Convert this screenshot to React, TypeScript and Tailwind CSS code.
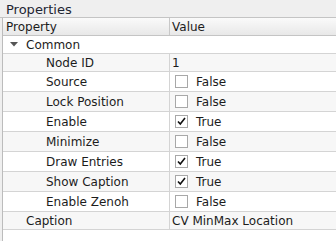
const rows: { name: string; value: string; check?: boolean; checked?: boolean }[] = [
    { name: 'Node ID', value: '1' },
    { name: 'Source', value: 'False', check: true, checked: false },
    { name: 'Lock Position', value: 'False', check: true, checked: false },
    { name: 'Enable', value: 'True', check: true, checked: true },
    { name: 'Minimize', value: 'False', check: true, checked: false },
    { name: 'Draw Entries', value: 'True', check: true, checked: true },
    { name: 'Show Caption', value: 'True', check: true, checked: true },
    { name: 'Enable Zenoh', value: 'False', check: true, checked: false },
]

const CheckBox = ({ checked }: { checked: boolean }) => {
    return (
        <span className="w-[13px] h-[13px] border border-[#a8a8a8] bg-white flex items-center justify-center">
            {checked && (
                <svg width="9" height="9" viewBox="0 0 9 9">
                    <path d="M1 4.5 L3.3 7 L8 1" fill="none" stroke="#111" strokeWidth="1.6" />
                </svg>
            )}
        </span>
    )
}

const PropRow = ({ name, value, check, checked, gray, indent }: { name: string, value: string, check?: boolean, checked?: boolean, gray: boolean, indent: number }) => {
    return (
        <div className={`flex border-b border-[#d4d4d4] ${check ? 'h-[20px]' : 'h-[18px]'} ${gray ? 'bg-[#f7f7f7]' : 'bg-white'}`}>
            <div className="w-[167px] border-r border-[#d4d4d4] flex items-center" style={{ paddingLeft: indent }}>
                {name}
            </div>
            <div className="flex-1 flex items-center pl-[2px] gap-[8px]">
                {check ? (
                    <>
                        <span className="ml-[3px]"><CheckBox checked={!!checked} /></span>
                        <span>{value}</span>
                    </>
                ) : (
                    <span>{value}</span>
                )}
            </div>
        </div>
    )
}

export default function App() {
    return (
        <div className="w-[336px] h-[241px] bg-[#efefef] text-[12px] text-[#1c1c1c] leading-none overflow-hidden" style={{ fontFamily: '"DejaVu Sans", sans-serif' }}>
            <div className="h-[18px] flex items-center pl-[6px] pt-[1px] border-b border-[#c4c4c4] text-[13px] text-[#1e2633]">
                Properties
            </div>
            <div className="ml-[2px] border-l border-[#bcbcbc] bg-white h-full">
                <div className="flex h-[18px] border-b border-[#c4c4c4] bg-gradient-to-b from-[#fafafa] to-[#e8e8e8]">
                    <div className="w-[167px] border-r border-[#c8c8c8] flex items-center pl-[3px] pt-[1px]">Property</div>
                    <div className="flex-1 flex items-center pl-[2px] pt-[1px]">Value</div>
                </div>
                <div className="flex h-[18px] border-b border-[#d4d4d4] items-center">
                    <svg width="8" height="5" viewBox="0 0 8 5" className="ml-[7px]">
                        <path d="M0 0 L8 0 L4 4.5 Z" fill="#555" />
                    </svg>
                    <span className="ml-[8px]">Common</span>
                </div>
                {rows.map((r, i) => (
                    <PropRow key={`row-${i}`} name={r.name} value={r.value} check={r.check} checked={r.checked} gray={i % 2 === 0} indent={43} />
                ))}
                <PropRow name="Caption" value="CV MinMax Location" gray={true} indent={23} />
            </div>
        </div>
    )
}
